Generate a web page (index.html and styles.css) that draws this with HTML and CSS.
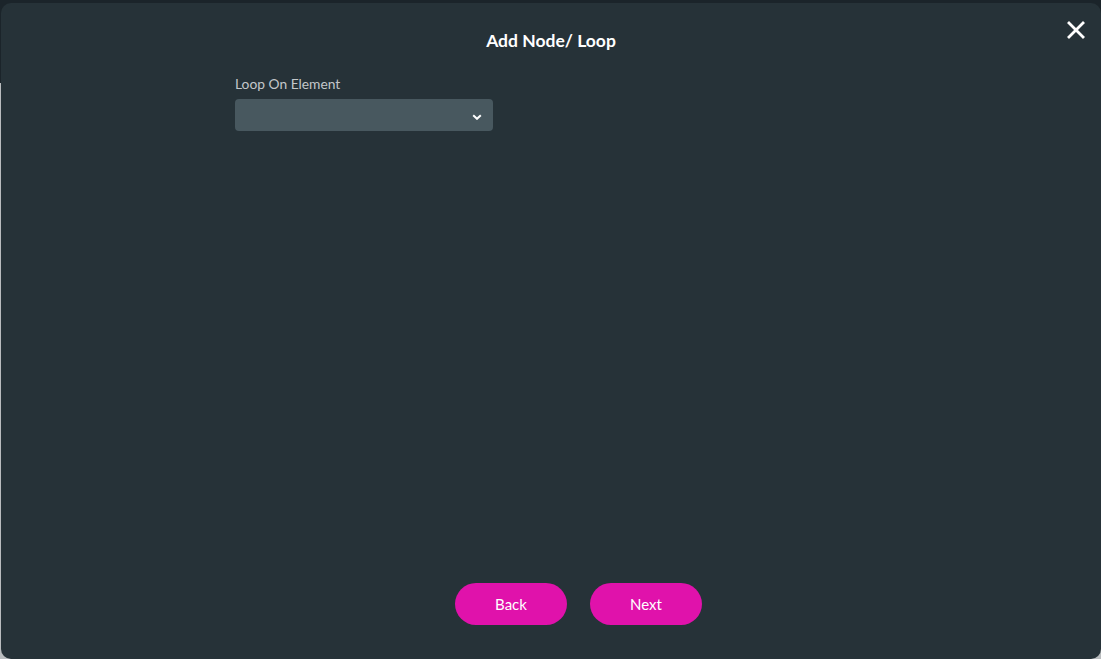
FILE: index.html
```html
<!DOCTYPE html>
<html lang="en">
<head>
  <meta charset="utf-8" />
  <meta name="viewport" content="width=device-width,initial-scale=1" />
  <title>Add Node / Loop</title>
  <link rel="stylesheet" href="styles.css">
</head>
<body>
  <!-- page behind the dialog -->
  <div class="backdrop">
    <header class="topbar"></header>
  </div>

  <!-- dialog -->
  <section class="modal" role="dialog" aria-labelledby="modal-title">
    <button class="close" aria-label="Close">
      <svg width="18" height="18" viewBox="0 0 18 18" aria-hidden="true">
        <path d="M2 2L16 16M16 2L2 16" stroke="#fff" stroke-width="2.8" stroke-linecap="square" fill="none"/>
      </svg>
    </button>

    <h1 id="modal-title" class="modal-title">Add Node/ Loop</h1>

    <div class="modal-body">
      <label class="field-label" for="loop-el">Loop On Element</label>
      <div class="select">
        <select id="loop-el"></select>
        <svg class="chev" width="10" height="6" viewBox="0 0 10 6" aria-hidden="true">
          <path d="M1.2 1.2L5 4.8L8.8 1.2" stroke="#fff" stroke-width="2" fill="none"/>
        </svg>
      </div>
    </div>

    <footer class="modal-actions">
      <button class="btn">Back</button>
      <button class="btn">Next</button>
    </footer>
  </section>
</body>
</html>
```

FILE: styles.css
```css
/* --- tokens --- */
:root{
  --c-page:#b9bcbe;
  --c-bar:#1b242a;
  --c-modal:#263238;
  --c-field:#48585f;
  --c-label:#c3c7ca;
  --c-pink:#e012ab;
}

*,*::before,*::after{box-sizing:border-box;margin:0;padding:0;}

html,body{height:100%;}

body{
  font-family:Lato,"Open Sans",sans-serif;
  background:var(--c-page);
  color:#fff;
  overflow:hidden;
}

.backdrop{height:100%;}
.topbar{height:83px;background:var(--c-bar);}

/* --- dialog --- */
.modal{
  position:fixed;
  top:3px;left:1px;right:0;bottom:0;
  background:var(--c-modal);
  border-radius:10px;
  display:flex;flex-direction:column;
}

.close{
  position:absolute;top:16px;right:14px;
  width:22px;height:22px;
  display:grid;place-items:center;
  background:none;border:0;cursor:pointer;
}

.modal-title{
  font-size:17.5px;font-weight:700;
  text-align:center;
  line-height:22px;
  padding-top:27px;
}

.modal-body{
  width:632px;
  margin:24px auto 0;
  flex:1;
}

.field-label{
  display:block;
  font-size:13.8px;
  color:var(--c-label);
  line-height:16px;
  margin-bottom:7px;
}

.select{
  position:relative;
  width:258px;height:32px;
}
.select select{
  appearance:none;-webkit-appearance:none;
  width:100%;height:100%;
  background:var(--c-field);
  border:0;border-radius:4px;
  color:#fff;font:inherit;
}
.select .chev{
  position:absolute;top:15px;right:11px;
  pointer-events:none;
}

/* --- actions --- */
.modal-actions{
  display:flex;justify-content:center;gap:23px;
  padding:0 0 34px 55px;
}

.btn{
  width:112px;height:42px;
  border:0;border-radius:21px;
  background:var(--c-pink);
  color:#fff;
  font-family:inherit;font-size:15px;
  cursor:pointer;
}
```
